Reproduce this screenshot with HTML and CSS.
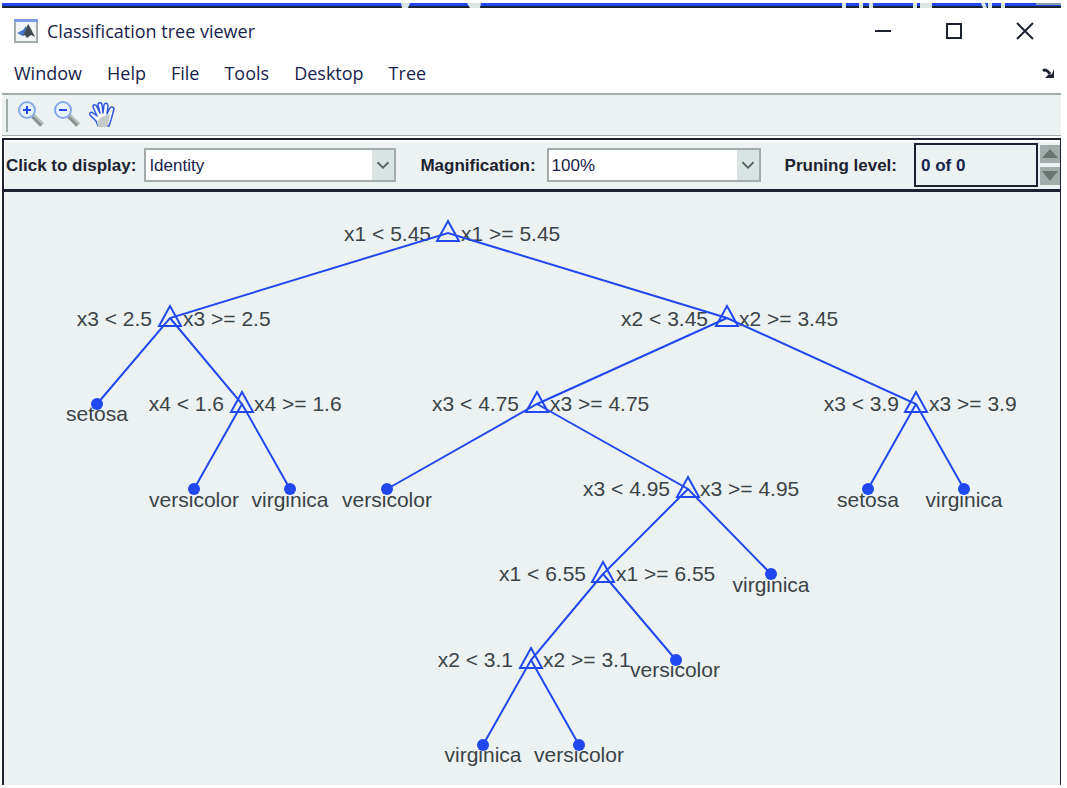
FILE: index.html
```html
<!DOCTYPE html>
<html lang="en">
<head>
<meta charset="utf-8">
<title>Classification tree viewer</title>
<link rel="stylesheet" href="styles.css">
</head>
<body>
<main class="window">
  <svg class="backdrop" viewBox="0 0 1059 5" preserveAspectRatio="none" aria-hidden="true">
    <path fill="#2148ee" d="M0 0h1059v3H0z"/>
    <path fill="#1c2230" d="M0 3h1059v2H0z"/>
    <path fill="#dce6e5" d="M399 0h9l-2 5h-6zM465 0h14l-1 5h-10zM840 0h4v5h-4zM857 0h4v5h-4zM867 0h4v5h-4zM911 0h4v5h-4zM918 0h12v5h-12zM979 0h4l2 5h-4zM986 0h4v5h-4zM999 0h4v5h-4z"/>
    <path fill="#8b9cae" d="M1034 0h25v2h-25z"/>
  </svg>
  <header class="titlebar">
    <svg class="app-icon" viewBox="0 0 24 24" aria-hidden="true">
      <path fill="#f2f5f5" stroke="#a4afad" stroke-width="2" d="M1 1h22v22H1z"/>
      <path fill="#7e9de8" d="M0 0h24v3H0z"/>
      <path fill="#4975cc" d="M3 14l6-3 3-4 1 4-4 6-2-1z"/>
      <path fill="#424a51" d="M9 17l5-12 3 5 4 8-4-2-4 3-2-3z"/>
    </svg>
    <h1 class="title">Classification tree viewer</h1>
    <div class="window-buttons">
      <button class="window-button" aria-label="Minimize"><svg viewBox="0 0 18 18"><path d="M1 9h16"/></svg></button>
      <button class="window-button" aria-label="Maximize"><svg viewBox="0 0 18 18"><path d="M2 2h14v14H2z"/></svg></button>
      <button class="window-button" aria-label="Close"><svg viewBox="0 0 18 18"><path d="M1 1l16 16M17 1L1 17"/></svg></button>
    </div>
  </header>
  <nav class="menubar" aria-label="Main menu">
    <button class="menu">Window</button>
    <button class="menu">Help</button>
    <button class="menu">File</button>
    <button class="menu">Tools</button>
    <button class="menu">Desktop</button>
    <button class="menu">Tree</button>
    <button class="dock" aria-label="Dock window"><svg viewBox="0 0 12 10"><path fill="none" stroke="#1c2230" stroke-width="3" d="M1 3c2-2 4-1 7 3"/><path fill="#1c2230" d="M12 1v9H3l3-3 4-1z"/></svg></button>
  </nav>
  <div class="toolbar" role="toolbar" aria-label="Figure tools">
    <span class="grip"></span>
    <button class="tool" aria-label="Zoom in">
      <svg viewBox="0 0 28 28"><path stroke="#88918f" stroke-width="5" d="M17 15l9 9"/><path stroke="#b8c1bf" stroke-width="2" d="M18 14l9 9"/><circle cx="11" cy="9" r="8" fill="#e8f2fa" stroke="#86a9ed" stroke-width="2"/><path stroke="#2148ee" stroke-width="2" d="M7 9h8M11 5v8"/></svg>
    </button>
    <button class="tool" aria-label="Zoom out">
      <svg viewBox="0 0 28 28"><path stroke="#88918f" stroke-width="5" d="M17 15l9 9"/><path stroke="#b8c1bf" stroke-width="2" d="M18 14l9 9"/><circle cx="11" cy="9" r="8" fill="#e8f2fa" stroke="#86a9ed" stroke-width="2"/><path stroke="#2148ee" stroke-width="2" d="M7 9h8"/></svg>
    </button>
    <button class="tool" aria-label="Pan">
      <svg viewBox="0 0 28 28"><path fill="#fafcfc" stroke="#2f58df" stroke-width="1.5" stroke-linejoin="round" d="M10 25L8 20 2 14c-1-3 2-3 3-2l4 3L5 6c0-3 3-3 4 0l3 6-2-8c0-3 4-3 4 0l1 8 1-8c1-3 4-2 4 1l-1 8 3-6c1-2 4-1 4 1l-3 11-2 6z"/><path fill="#c3cbca" d="M13 16l9-3-1 6-2 7h-9l-1-5z"/></svg>
    </button>
  </div>
  <form class="controls">
    <div class="field">
      <label for="display">Click to display:</label>
      <span class="combo combo-wide">
        <select id="display"><option>Identity</option><option>Variable ranges</option><option>Node statistics</option></select>
        <svg class="chevron" viewBox="0 0 24 30" aria-hidden="true"><path d="M6 12l6 6 6-6"/></svg>
      </span>
    </div>
    <div class="field field-zoom">
      <label for="zoom">Magnification:</label>
      <span class="combo">
        <select id="zoom"><option>100%</option><option>200%</option><option>400%</option></select>
        <svg class="chevron" viewBox="0 0 24 30" aria-hidden="true"><path d="M6 12l6 6 6-6"/></svg>
      </span>
    </div>
    <div class="field field-level">
      <label for="level">Pruning level:</label>
      <input id="level" class="level" type="text" value="0 of 0" readonly>
    </div>
    <div class="spinner">
      <button type="button" aria-label="Increase level"><svg viewBox="0 0 20 18"><path d="M10 4l8 9H2z"/></svg></button>
      <button type="button" aria-label="Decrease level"><svg viewBox="0 0 20 18"><path d="M10 14l8-10H2z"/></svg></button>
    </div>
  </form>
  <section class="canvas" aria-label="Decision tree">
    <svg class="tree" viewBox="4 192 1056 593">
      <defs><path id="split" d="M0-12L11 8H-11z"/></defs>
      <g class="labels">
        <g class="left">
          <text x="431" y="241">x1 &lt; 5.45</text>
          <text x="152" y="326">x3 &lt; 2.5</text>
          <text x="708" y="326">x2 &lt; 3.45</text>
          <text x="224" y="411">x4 &lt; 1.6</text>
          <text x="519" y="411">x3 &lt; 4.75</text>
          <text x="899" y="411">x3 &lt; 3.9</text>
          <text x="670" y="496">x3 &lt; 4.95</text>
          <text x="586" y="581">x1 &lt; 6.55</text>
          <text x="513" y="667">x2 &lt; 3.1</text>
        </g>
        <g class="right">
          <text x="461" y="241">x1 &gt;= 5.45</text>
          <text x="183" y="326">x3 &gt;= 2.5</text>
          <text x="739" y="326">x2 &gt;= 3.45</text>
          <text x="254" y="411">x4 &gt;= 1.6</text>
          <text x="550" y="411">x3 &gt;= 4.75</text>
          <text x="929" y="411">x3 &gt;= 3.9</text>
          <text x="700" y="496">x3 &gt;= 4.95</text>
          <text x="616" y="581">x1 &gt;= 6.55</text>
          <text x="543" y="667">x2 &gt;= 3.1</text>
        </g>
        <g class="leaf">
          <text x="97" y="421">setosa</text>
          <text x="194" y="507">versicolor</text>
          <text x="290" y="507">virginica</text>
          <text x="387" y="507">versicolor</text>
          <text x="868" y="507">setosa</text>
          <text x="964" y="507">virginica</text>
          <text x="771" y="592">virginica</text>
          <text x="675" y="677">versicolor</text>
          <text x="483" y="762">virginica</text>
          <text x="579" y="762">versicolor</text>
        </g>
      </g>
      <path class="edges" d="M97 404L170 318L448 233L727 318L916 404L964 489M170 318L242 404L290 489M242 404L194 489M727 318L537 404L387 489M537 404L688 489L771 574M688 489L603 574L676 660M603 574L531 660L483 745M531 660L579 745M916 404L868 489"/>
      <g class="splits">
        <use href="#split" x="448" y="233"/><use href="#split" x="170" y="318"/><use href="#split" x="727" y="318"/>
        <use href="#split" x="242" y="404"/><use href="#split" x="537" y="404"/><use href="#split" x="916" y="404"/>
        <use href="#split" x="688" y="489"/><use href="#split" x="603" y="574"/><use href="#split" x="531" y="660"/>
      </g>
      <g class="dots">
        <circle cx="97" cy="404" r="6"/><circle cx="194" cy="489" r="6"/><circle cx="290" cy="489" r="6"/><circle cx="387" cy="489" r="6"/><circle cx="868" cy="489" r="6"/>
        <circle cx="964" cy="489" r="6"/><circle cx="771" cy="574" r="6"/><circle cx="676" cy="660" r="6"/><circle cx="483" cy="745" r="6"/><circle cx="579" cy="745" r="6"/>
      </g>
    </svg>
  </section>
</main>
</body>
</html>
```
FILE: styles.css
```css
:root {
  --ink: #1c2230;
  --panel: #ecf2f1;
  --blue: #2148ee;
  --grey: #a2adab;
}
* { box-sizing: border-box; }
body {
  margin: 0;
  padding: 3px 6px 3px 2px;
  background: #fff;
  color: var(--ink);
  font-family: "Liberation Sans", Arial, sans-serif;
}
button { margin: 0; padding: 0; border: 0; background: none; color: inherit; font: inherit; }
svg { display: block; }
.window { display: flex; flex-direction: column; }
.backdrop { width: 100%; height: 5px; }
.titlebar {
  display: flex;
  align-items: center;
  height: 45px;
  padding: 0 27px 0 12px;
  font-family: "Open Sans", "Noto Sans", sans-serif;
}
.app-icon { width: 24px; height: 24px; }
.title { flex: 1; margin: 0 0 0 9px; font-size: 18px; font-weight: 400; line-height: 24px; color: #18234c; }
.window-buttons { display: flex; gap: 53px; }
.window-button svg { width: 18px; height: 18px; fill: none; stroke: var(--ink); stroke-width: 2; }
.menubar {
  display: flex;
  align-items: center;
  gap: 25px;
  height: 40px;
  padding: 0 7px 0 12px;
  font: 18px/24px "Open Sans", "Noto Sans", sans-serif;
  color: #18234c;
}
.dock { margin-left: auto; }
.dock svg { width: 12px; height: 10px; }
.toolbar {
  display: flex;
  align-items: center;
  gap: 8px;
  height: 43px;
  padding: 0 4px;
  border-top: 2px solid var(--grey);
  border-bottom: 1px solid var(--grey);
  background: var(--panel);
}
.grip { width: 2px; height: 33px; background: var(--grey); }
.tool svg { width: 28px; height: 28px; fill: none; }
.controls {
  display: flex;
  align-items: center;
  margin-top: 2px;
  height: 54px;
  padding: 0 0 0 2px;
  border: solid var(--ink);
  border-width: 2px 1px 3px 2px;
  background: var(--panel);
  font-size: 17px;
  line-height: 20px;
  box-shadow: inset 1px 2px #fff;
}
.field { display: flex; align-items: center; gap: 8px; margin-right: 24px; }
.field-zoom { gap: 11px; }
.field label { padding-top: 3px; font-weight: 700; white-space: nowrap; }
.combo { position: relative; width: 214px; }
.combo-wide { width: 252px; }
.combo select {
  appearance: none;
  display: block;
  width: 100%;
  height: 34px;
  padding: 3px 26px 0 3px;
  border: 2px solid var(--grey);
  border-radius: 0;
  background: #fff;
  color: #18234c;
  font: inherit;
}
.chevron {
  position: absolute;
  top: 2px;
  right: 2px;
  width: 22px;
  height: 30px;
  background: #d8e3e2;
  fill: none;
  stroke: #596361;
  stroke-width: 2;
  pointer-events: none;
}
.field-level { flex: 1; min-width: 0; gap: 17px; margin-right: 2px; }
.level {
  flex: 1;
  width: 0;
  min-width: 0;
  height: 44px;
  padding: 3px 5px 0;
  border: 2px solid var(--ink);
  border-radius: 0;
  background: var(--panel);
  color: #18234c;
  font: inherit;
  font-weight: 700;
}
.spinner { display: grid; gap: 4px; }
.spinner button { background: var(--grey); }
.spinner svg { width: 20px; height: 18px; fill: #69736f; }
.canvas {
  border: solid var(--ink);
  border-width: 0 1px 0 2px;
  background: var(--panel);
}
.tree { width: 100%; height: auto; }
.labels { font-size: 21px; fill: #3b4347; }
.left { text-anchor: end; }
.leaf { text-anchor: middle; }
.edges, .splits { fill: none; stroke: var(--blue); stroke-width: 2; }
.dots { fill: var(--blue); }
```
